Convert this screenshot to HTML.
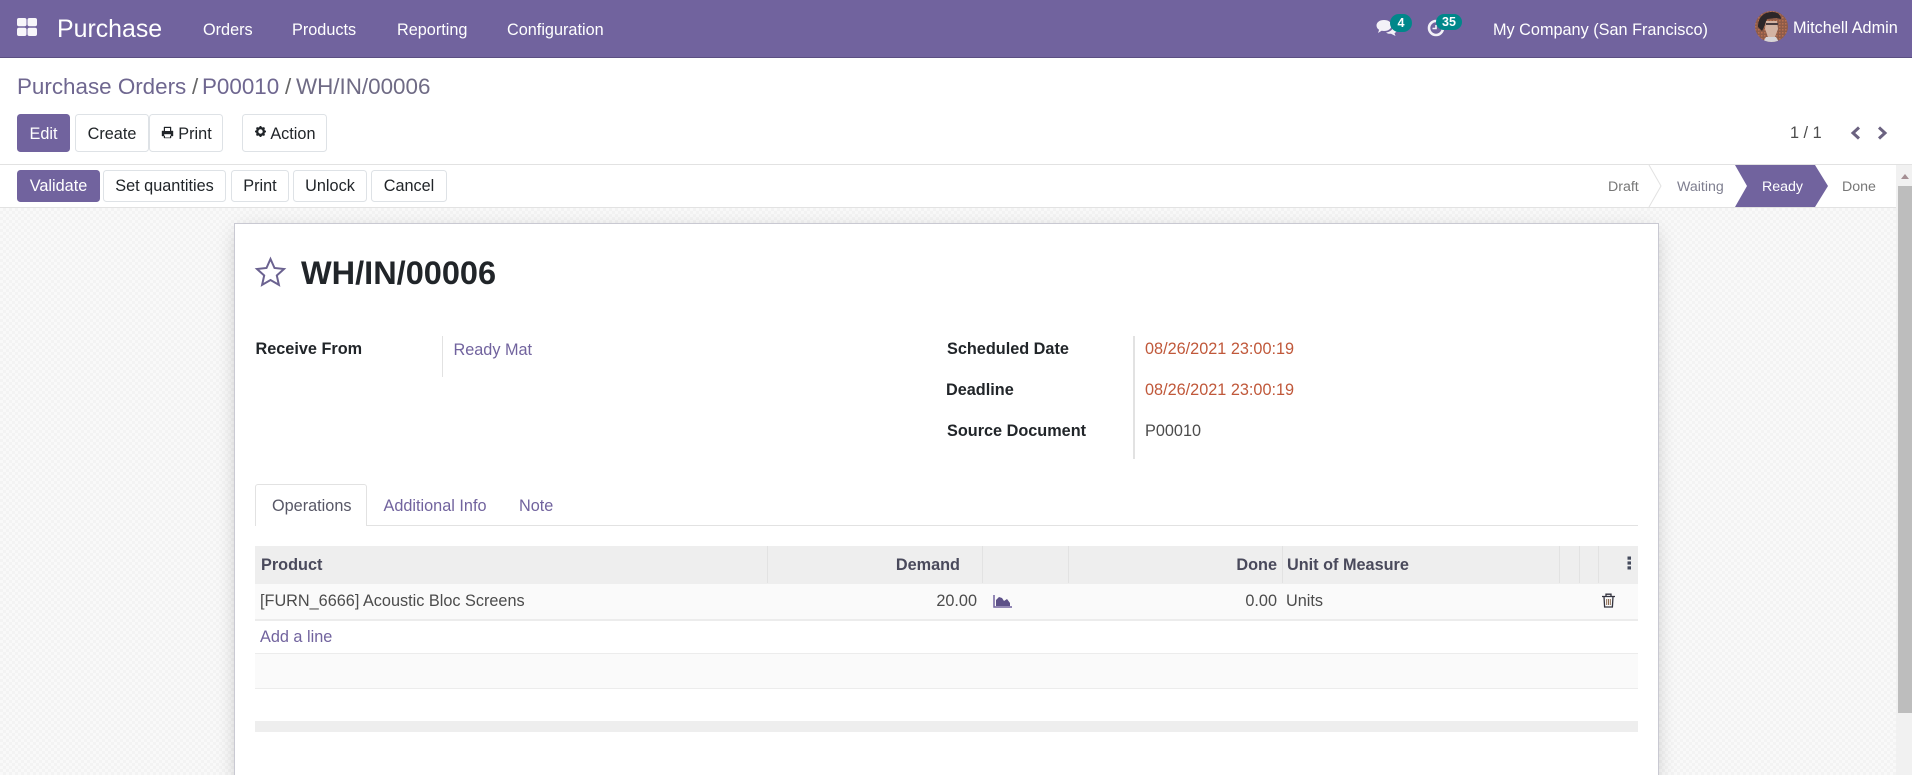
<!DOCTYPE html>
<html lang="en"><head><meta charset="utf-8"><title>WH/IN/00006</title>
<style>
html,body{margin:0;padding:0;width:1912px;height:775px;overflow:hidden;background:#fff}
body{font-family:"Liberation Sans",Arial,sans-serif;font-size:16.25px;color:#4c4c4c;position:relative}
.a,.t,.b{position:absolute}
.t{line-height:20px;white-space:nowrap}
.r{text-align:right}
.w{color:#fff}.p{color:#71639e}.k{color:#212529;font-weight:700}.d{color:#c0583a}.h{color:#4a4a5c;font-weight:700}
.b{box-sizing:border-box;border:1px solid #dee2e6;border-radius:3.5px;background:#fff;color:#212529;text-align:center;white-space:nowrap}
.b.m{background:#71639e;border-color:#71639e;color:#fff}
.v{position:absolute;width:1px;background:#e2e2e2}
.bc{font-size:22.4px;line-height:24px;top:75px;color:#6f6790}
svg{position:absolute;display:block}
</style></head><body>

<div class="a" style="left:0;top:0;width:1912px;height:57px;background:#71639e;border-bottom:1px solid #5b4f82"></div>
<svg style="left:17px;top:18px" width="20" height="18" viewBox="0 0 20 18"><g fill="#f7f6fa"><rect x="0" y="0" width="9.500" height="8.300" rx="2"/><rect x="10.500" y="0" width="9.500" height="8.300" rx="2"/><rect x="0" y="9.700" width="9.500" height="8.300" rx="2"/><rect x="10.500" y="9.700" width="9.500" height="8.300" rx="2"/></g></svg>
<div class="t w" style="left:57px;top:18px;font-size:24.9px;line-height:22px;height:22px">Purchase</div>
<div class="t w" style="left:203px;top:20px">Orders</div>
<div class="t w" style="left:292px;top:20px">Products</div>
<div class="t w" style="left:397px;top:20px">Reporting</div>
<div class="t w" style="left:507px;top:20px">Configuration</div>

<svg style="left:1376px;top:19px" width="22" height="18" viewBox="0 0 22 18"><path d="M8 1C3.500 1 .5 3.400.5 6.500c0 1.800 1 3.300 2.600 4.300L2 14l3.600-2.200c.8.2 1.600.2 2.400.2 4.500 0 7.500-2.400 7.500-5.500S12.500 1 8 1z" fill="#f3f1f7"/><path d="M17 7c.3 3.500-3 6-7 6.500 1.200 1 3 1.500 5 1.200L19.500 17l-1-2.800C20.500 13 21.500 11.500 21.500 10c0-1.500-1.800-2.700-4.500-3z" fill="#f3f1f7"/></svg>
<div class="a" style="left:1390px;top:14px;width:22px;height:18px;border-radius:9px;background:#00878a;color:#fff;font-size:12.500px;font-weight:700;text-align:center;line-height:18px">4</div>
<svg style="left:1427px;top:19px" width="20" height="18" viewBox="0 0 20 18"><circle cx="9" cy="9" r="7" fill="none" stroke="#f3f1f7" stroke-width="2.600"/><path d="M9 6v3.500H5.500" fill="none" stroke="#f3f1f7" stroke-width="1.600"/></svg>
<div class="a" style="left:1436px;top:14px;width:26px;height:16px;border-radius:8px;background:#00878a;color:#fff;font-size:12.500px;font-weight:700;text-align:center;line-height:16px">35</div>
<div class="t w" style="left:1493px;top:20px">My Company (San Francisco)</div>
<svg style="left:1755px;top:11px" width="33" height="31" viewBox="0 0 33 31"><defs><clipPath id="c"><ellipse cx="16.500" cy="15.500" rx="16.500" ry="15.500"/></clipPath><pattern id="n" width="3" height="3" patternUnits="userSpaceOnUse"><rect width="3" height="3" fill="#8e5b48"/><rect width="1.500" height="1.500" fill="#b9704f"/></pattern></defs><g clip-path="url(#c)"><rect width="33" height="31" fill="url(#n)"/><path d="M3 16C3 5 10 1 17 1c6 0 9 3 9 7l-5-1-9 1-3 8-2 4z" fill="#2c2629"/><path d="M11 10h11l1 8-3 8h-7l-3-8z" fill="#d3b3a3"/><rect x="11" y="12" width="12" height="2" fill="#4a3d40"/><path d="M8 31l3-5h10l3 5z" fill="#d6d4d8"/></g></svg>
<div class="t w" style="left:1793px;top:18px">Mitchell Admin</div>

<div class="t bc" style="left:17px">Purchase Orders</div>
<div class="t bc" style="left:192px;color:#666">/</div>
<div class="t bc" style="left:202px">P00010</div>
<div class="t bc" style="left:285px;color:#666">/</div>
<div class="t bc" style="left:296px;color:#6f6b85">WH/IN/00006</div>
<div class="b m" style="left:17px;top:114px;width:53px;height:38px;line-height:38px">Edit</div>
<div class="b" style="left:75px;top:114px;width:74px;height:38px;line-height:38px">Create</div>
<div class="b" style="left:149px;top:114px;width:74px;height:38px;line-height:38px">&nbsp;&nbsp;&nbsp;&nbsp;Print<svg style="left:11px;top:11px" width="13" height="13" viewBox="0 0 13 13"><path d="M3 5V1h7v4M1 5h11v5H1zM3 8v4h7V8z" fill="#212529" fill-rule="evenodd" stroke="#212529" stroke-width=".4"/><rect x="4" y="9" width="5" height="2.500" fill="#fff"/><rect x="4" y="2" width="5" height="3" fill="#fff"/></svg></div>
<div class="b" style="left:242px;top:114px;width:85px;height:38px;line-height:38px">&nbsp;&nbsp;&nbsp;&thinsp;Action<svg style="left:12px;top:11px" width="11" height="11" viewBox="0 0 12 12"><circle cx="6" cy="6" r="3.700" fill="none" stroke="#212529" stroke-width="2.600"/><path d="M6 0v2M6 10v2M0 6h2M10 6h2M1.700 1.700l1.400 1.400M8.900 8.900l1.400 1.400M1.700 10.300l1.400-1.400M8.900 3.100l1.400-1.400" stroke="#212529" stroke-width="2"/></svg></div>
<div class="t" style="left:1790px;top:123px">1 / 1</div>
<svg style="left:1849px;top:126px" width="40" height="14" viewBox="0 0 40 14"><path d="M10 1.500L4 7l6 5.500M30 1.500L36 7l-6 5.500" fill="none" stroke="#6b6280" stroke-width="3"/></svg>

<div class="a" style="left:0;top:164px;width:1912px;height:1px;background:#e2e2e2"></div>
<div class="a" style="left:0;top:207px;width:1897px;height:1px;background:#e2e2e2"></div>
<div class="b m" style="left:17px;top:170px;width:83px;height:32px;line-height:31px">Validate</div>
<div class="b" style="left:103px;top:170px;width:123px;height:32px;line-height:31px">Set quantities</div>
<div class="b" style="left:231px;top:170px;width:58px;height:32px;line-height:31px">Print</div>
<div class="b" style="left:293px;top:170px;width:74px;height:32px;line-height:31px">Unlock</div>
<div class="b" style="left:371px;top:170px;width:76px;height:32px;line-height:31px">Cancel</div>
<div class="t" style="left:1608px;top:177px;font-size:14.200px;color:#777">Draft</div>
<svg style="left:1648px;top:165px" width="14" height="42" viewBox="0 0 14 42"><path d="M1 0l12 21L1 42" fill="none" stroke="#e2e2e2"/></svg>
<div class="t" style="left:1677px;top:177px;font-size:14.200px;color:#7f7f90">Waiting</div>
<svg style="left:1734px;top:165px" width="95" height="42" viewBox="0 0 95 42"><path d="M1 0H81L94 21 81 42H1L13 21z" fill="#71639e"/></svg>
<div class="t w" style="left:1762px;top:177px;font-size:14.200px">Ready</div>
<div class="t" style="left:1842px;top:177px;font-size:14.200px;color:#777">Done</div>

<div class="a" style="left:0;top:208px;width:1897px;height:567px;background-color:#f6f6f6;background-image:conic-gradient(#f3f3f3 25%,#f9f9f9 0 50%,#f3f3f3 0 75%,#f9f9f9 0);background-size:6px 6px"></div>
<div class="a" style="left:1896px;top:165px;width:16px;height:610px;background:#f1f1f1"></div>
<div class="a" style="left:1898px;top:186px;width:14px;height:527px;background:#bdbdbd"></div>
<svg style="left:1901px;top:174px" width="8" height="5" viewBox="0 0 8 5"><path d="M4 0l4 5H0z" fill="#a58f94"/></svg>

<div class="a" style="left:234px;top:223px;width:1425px;height:560px;box-sizing:border-box;background:#fff;border:1px solid #c9c9d2;box-shadow:0 5px 20px -4px rgba(0,0,0,.22)"></div>

<svg style="left:254px;top:256px" width="33" height="31" viewBox="0 0 33 31"><path d="M16.500 3l4 9 9.500 1-7.200 6.500 2.100 9.400-8.400-4.900-8.400 4.900 2.100-9.400L3 13l9.500-1z" fill="none" stroke="#6b6290" stroke-width="2"/></svg>
<div class="t" style="left:301px;top:257px;font-size:32.500px;line-height:32px;height:32px;font-weight:700;color:#212529">WH/IN/00006</div>

<div class="t k" style="left:255.500px;top:339px">Receive From</div>
<div class="v" style="left:442px;top:336px;height:41px"></div>
<div class="t p" style="left:453.500px;top:340px">Ready Mat</div>
<div class="t k" style="left:947px;top:339px">Scheduled Date</div>
<div class="t k" style="left:946px;top:380px">Deadline</div>
<div class="t k" style="left:947px;top:421px">Source Document</div>
<div class="v" style="left:1133px;top:336px;height:123px;width:2px"></div>
<div class="t d" style="left:1145px;top:339px">08/26/2021 23:00:19</div>
<div class="t d" style="left:1145px;top:380px">08/26/2021 23:00:19</div>
<div class="t" style="left:1145px;top:421px">P00010</div>

<div class="a" style="left:255px;top:525px;width:1383px;height:1px;background:#e2e2e2"></div>
<div class="a" style="left:255px;top:484px;width:112px;height:42px;box-sizing:border-box;background:#fff;border:1px solid #e2e2e2;border-bottom:0;border-radius:3px 3px 0 0"></div>
<div class="t" style="left:272px;top:496px;color:#575766">Operations</div>
<div class="t p" style="left:383.500px;top:496px">Additional Info</div>
<div class="t p" style="left:519px;top:496px">Note</div>

<div class="a" style="left:255px;top:546px;width:1383px;height:38px;background:#eee"></div>
<div class="a" style="left:255px;top:584px;width:1383px;height:35px;background:#fafafa;border-bottom:2px solid #ececec"></div>
<div class="a" style="left:255px;top:653px;width:1383px;height:34px;background:#fafafa;border-top:1px solid #ececec;border-bottom:1px solid #ececec"></div>
<div class="a" style="left:255px;top:721px;width:1383px;height:11px;background:#eee"></div>
<div class="v" style="left:767px;top:546px;height:37px"></div>
<div class="v" style="left:982px;top:546px;height:37px"></div>
<div class="v" style="left:1068px;top:546px;height:37px"></div>
<div class="v" style="left:1282px;top:546px;height:37px"></div>
<div class="v" style="left:1559px;top:546px;height:37px"></div>
<div class="v" style="left:1579px;top:546px;height:37px"></div>
<div class="v" style="left:1598px;top:546px;height:37px"></div>
<div class="t h" style="left:261px;top:555px">Product</div>
<div class="t h r" style="left:860px;top:555px;width:100px">Demand</div>
<div class="t h r" style="left:1177px;top:555px;width:100px">Done</div>
<div class="t h" style="left:1287px;top:555px">Unit of Measure</div>
<svg style="left:1627px;top:556px" width="5" height="14" viewBox="0 0 5 14"><g fill="#444a5c"><rect x="0.500" y="0.500" width="3.500" height="3.200"/><rect x="0.500" y="5.400" width="3.500" height="3.200"/><rect x="0.500" y="10.300" width="3.500" height="3.200"/></g></svg>
<div class="t" style="left:260px;top:591px">[FURN_6666] Acoustic Bloc Screens</div>
<div class="t r" style="left:877px;top:591px;width:100px">20.00</div>
<svg style="left:993px;top:595px" width="19" height="13" viewBox="0 0 19 13"><path d="M1 0v12h18" fill="none" stroke="#71639e" stroke-width="1.500"/><path d="M3 11V5l3-3 3 1 2 3 3-2 3 4v3z" fill="#5d5188"/></svg>
<div class="t r" style="left:1177px;top:591px;width:100px">0.00</div>
<div class="t" style="left:1286px;top:591px">Units</div>
<svg style="left:1602px;top:593px" width="13" height="15" viewBox="0 0 13 15"><path d="M0 3.500h13M4 3.500V1.200h5v2.300M2 3.500l.6 10.500h7.800L11 3.500" fill="none" stroke="#33333f" stroke-width="1.300"/><path d="M4.700 6v6M6.500 6v6M8.300 6v6" stroke="#8a6a50" stroke-width="1"/></svg>
<div class="t p" style="left:260px;top:627px">Add a line</div>
</body></html>
